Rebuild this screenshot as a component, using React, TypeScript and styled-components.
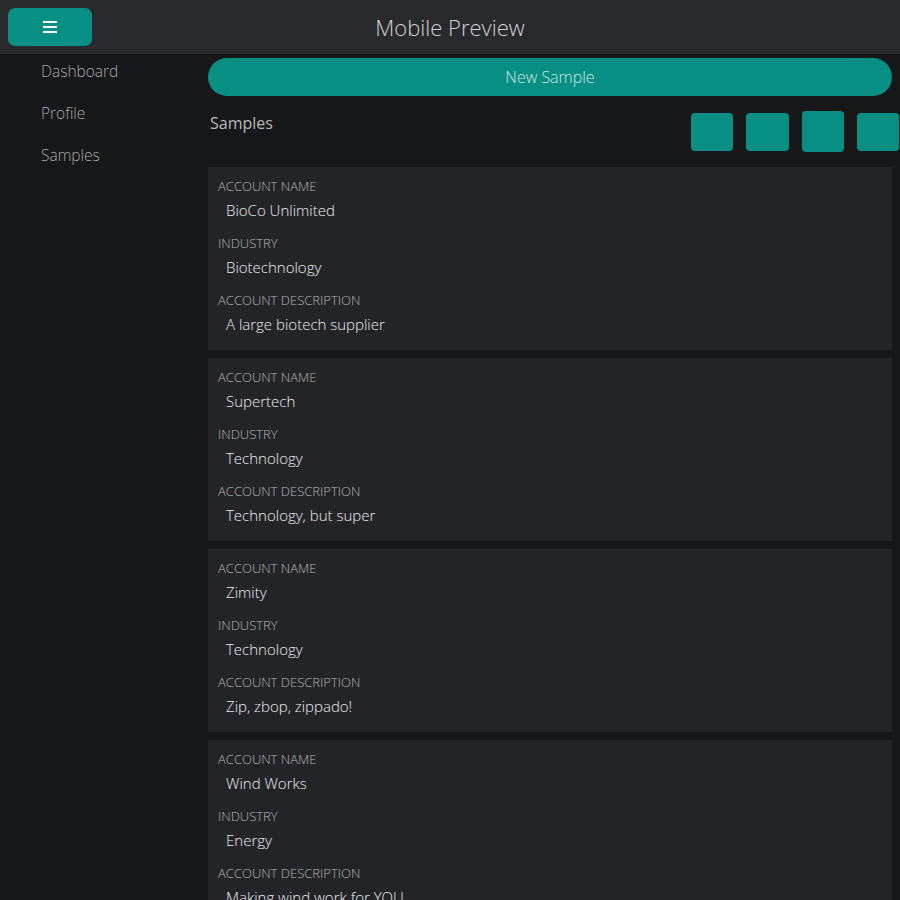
import React from 'react';
import styled, { createGlobalStyle } from 'styled-components';

const GlobalStyle = createGlobalStyle`
  html, body {
    margin: 0;
    padding: 0;
    background: #161719;
    font-family: "Open Sans", "Noto Sans", sans-serif;
    overflow: hidden;
  }
`;

const Page = styled.div`
  width: 900px;
  height: 900px;
  display: flex;
  flex-direction: column;
  background: #161719;
  overflow: hidden;
`;

const Header = styled.header`
  height: 54px;
  flex-shrink: 0;
  background: #28292d;
  display: grid;
  grid-template-columns: 100px 1fr 100px;
  align-items: center;
  padding: 0 8px;
  box-sizing: border-box;
`;

const MenuButton = styled.button`
  width: 84px;
  height: 38px;
  border: none;
  border-radius: 7px;
  background: #088f84;
  display: flex;
  align-items: center;
  justify-content: center;
  padding: 0;
  cursor: pointer;
`;

const Title = styled.h1`
  margin: 0;
  text-align: center;
  font-size: 22px;
  font-weight: 300;
  color: #d2d2d4;
`;

const Body = styled.div`
  flex: 1;
  display: flex;
  min-height: 0;
`;

const Sidebar = styled.nav`
  width: 200px;
  flex-shrink: 0;
  display: flex;
  flex-direction: column;
  padding-top: 6px;
`;

const NavItem = styled.a`
  display: block;
  padding-left: 41px;
  height: 42px;
  line-height: 22px;
  font-size: 15.5px;
  font-weight: 300;
  color: #a8a8aa;
`;

const Main = styled.main`
  flex: 1;
  padding: 4px 8px 0;
  min-width: 0;
`;

const PrimaryButton = styled.button`
  display: block;
  height: 38px;
  border: none;
  border-radius: 19px;
  background: #088f84;
  color: #cfe6e3;
  font-family: inherit;
  font-size: 16px;
  font-weight: 300;
  width: 100%;
  cursor: pointer;
`;

const Toolbar = styled.div`
  display: flex;
  align-items: flex-start;
  margin-top: 15px;
  margin-right: -7px;
`;

const SectionTitle = styled.h2`
  flex: 1;
  margin: 0;
  padding: 1px 0 0 2px;
  font-size: 16px;
  font-weight: 400;
  line-height: 22px;
  color: #b8b8ba;
`;

const ToolGroup = styled.div`
  display: flex;
  gap: 13px;
  padding-top: 2px;
`;

const ToolButton = styled.button<{ $raised?: boolean; $wide?: boolean }>`
  width: ${(p) => (p.$wide ? '43px' : '42px')};
  height: ${(p) => (p.$raised ? '41px' : '38px')};
  margin-top: ${(p) => (p.$raised ? '-2px' : '0')};
  border: none;
  border-radius: 4px;
  background: #088f84;
  padding: 0;
  cursor: pointer;
`;

const CardList = styled.div`
  display: flex;
  flex-direction: column;
  gap: 8px;
  margin-top: 15px;
`;

const Card = styled.section`
  background: #232428;
  padding: 10px 10px 2px;
`;

const Field = styled.div`
  margin-bottom: 13px;
`;

const Label = styled.div`
  font-size: 13px;
  line-height: 18px;
  font-weight: 300;
  text-transform: uppercase;
  color: #b4b4b6;
`;

const Value = styled.div`
  margin-top: 4px;
  padding-left: 8px;
  font-size: 15px;
  line-height: 22px;
  font-weight: 300;
  color: #ececee;
`;

const samples = [
  { name: 'BioCo Unlimited', industry: 'Biotechnology', description: 'A large biotech supplier' },
  { name: 'Supertech', industry: 'Technology', description: 'Technology, but super' },
  { name: 'Zimity', industry: 'Technology', description: 'Zip, zbop, zippado!' },
  { name: 'Wind Works', industry: 'Energy', description: 'Making wind work for YOU' },
];

const HamburgerIcon = () => (
  <svg width="14" height="12" viewBox="0 0 14 12">
    <rect x="0" y="0" width="14" height="2" fill="#fff" />
    <rect x="0" y="5" width="14" height="2" fill="#fff" />
    <rect x="0" y="10" width="14" height="2" fill="#fff" />
  </svg>
);

const App: React.FC = () => {
  return (
    <>
      <GlobalStyle />
      <Page>
        <Header>
          <MenuButton aria-label="menu">
            <HamburgerIcon />
          </MenuButton>
          <Title>Mobile Preview</Title>
          <div />
        </Header>
        <Body>
          <Sidebar>
            <NavItem>Dashboard</NavItem>
            <NavItem>Profile</NavItem>
            <NavItem>Samples</NavItem>
          </Sidebar>
          <Main>
            <PrimaryButton>New Sample</PrimaryButton>
            <Toolbar>
              <SectionTitle>Samples</SectionTitle>
              <ToolGroup>
                <ToolButton />
                <ToolButton $wide />
                <ToolButton $raised />
                <ToolButton />
              </ToolGroup>
            </Toolbar>
            <CardList>
              {samples.map((s) => (
                <Card key={s.name}>
                  <Field>
                    <Label>Account Name</Label>
                    <Value>{s.name}</Value>
                  </Field>
                  <Field>
                    <Label>Industry</Label>
                    <Value>{s.industry}</Value>
                  </Field>
                  <Field>
                    <Label>Account Description</Label>
                    <Value>{s.description}</Value>
                  </Field>
                </Card>
              ))}
            </CardList>
          </Main>
        </Body>
      </Page>
    </>
  );
};

export default App;
